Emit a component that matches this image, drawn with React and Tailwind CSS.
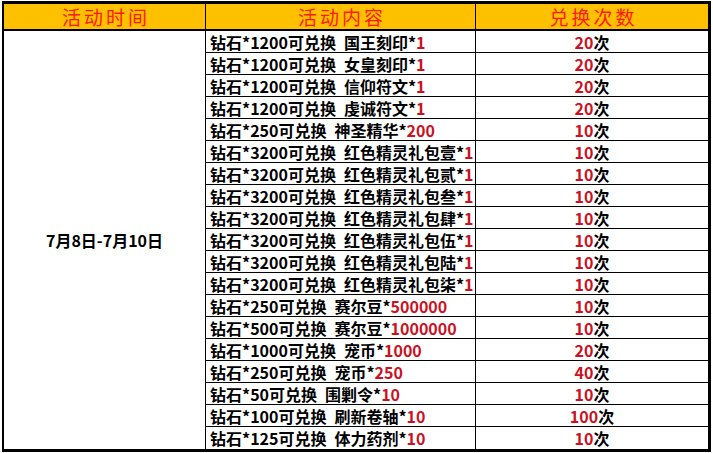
const rows = [
  ["1200", "国王刻印", "1", "20"],
  ["1200", "女皇刻印", "1", "20"],
  ["1200", "信仰符文", "1", "20"],
  ["1200", "虔诚符文", "1", "20"],
  ["250", "神圣精华", "200", "10"],
  ["3200", "红色精灵礼包壹", "1", "10"],
  ["3200", "红色精灵礼包贰", "1", "10"],
  ["3200", "红色精灵礼包叁", "1", "10"],
  ["3200", "红色精灵礼包肆", "1", "10"],
  ["3200", "红色精灵礼包伍", "1", "10"],
  ["3200", "红色精灵礼包陆", "1", "10"],
  ["3200", "红色精灵礼包柒", "1", "10"],
  ["250", "赛尔豆", "500000", "10"],
  ["500", "赛尔豆", "1000000", "10"],
  ["1000", "宠币", "1000", "20"],
  ["250", "宠币", "250", "40"],
  ["50", "围剿令", "10", "10"],
  ["100", "刷新卷轴", "10", "100"],
  ["125", "体力药剂", "10", "10"],
]

const font = { fontFamily: "'Noto Sans CJK SC', 'Noto Sans', sans-serif" }

export default function App() {
  return (
    <div className="w-[713px] h-[453px] bg-white pt-[1px] pl-[2px]" style={font}>
      <div className="w-[709px] border-black border-t-[3px] border-l-2 border-r-[3px] border-b-[3px]">
        {/* header */}
        <div className="grid grid-cols-[201px_270px_233px] h-[27px] bg-[#FFC000] border-b-2 border-black text-[19px] tracking-[3px] text-[#FF1A00] leading-none">
          <div className="flex items-center justify-center pl-[3px]">活动时间</div>
          <div className="flex items-center justify-center pl-[3px] border-l border-black">活动内容</div>
          <div className="flex items-center justify-center pl-[3px] border-l border-black">兑换次数</div>
        </div>

        {/* body */}
        <div className="flex">
          <div className="w-[201px] flex items-center justify-center text-[16px] font-bold text-black">
            7月8日-7月10日
          </div>
          <div className="flex-1">
            {rows.map((r, i) => (
              <div
                key={i}
                className={
                  "grid grid-cols-[270px_233px] h-[22px] text-[16px] font-bold leading-none text-black " +
                  (i < rows.length - 1 ? "border-b border-black" : "")
                }
              >
                <div className="flex items-center border-l border-black pl-[4px] whitespace-nowrap">
                  <span>钻石*{r[0]}可兑换</span>
                  <span className="inline-block w-[8px]"></span>
                  <span>{r[1]}*</span>
                  <span className="text-[#CC1122]">{r[2]}</span>
                </div>
                <div className="flex items-center justify-center border-l border-black">
                  <span className="text-[#CC1122]">{r[3]}</span>
                  <span>次</span>
                </div>
              </div>
            ))}
          </div>
        </div>
      </div>
    </div>
  )
}
